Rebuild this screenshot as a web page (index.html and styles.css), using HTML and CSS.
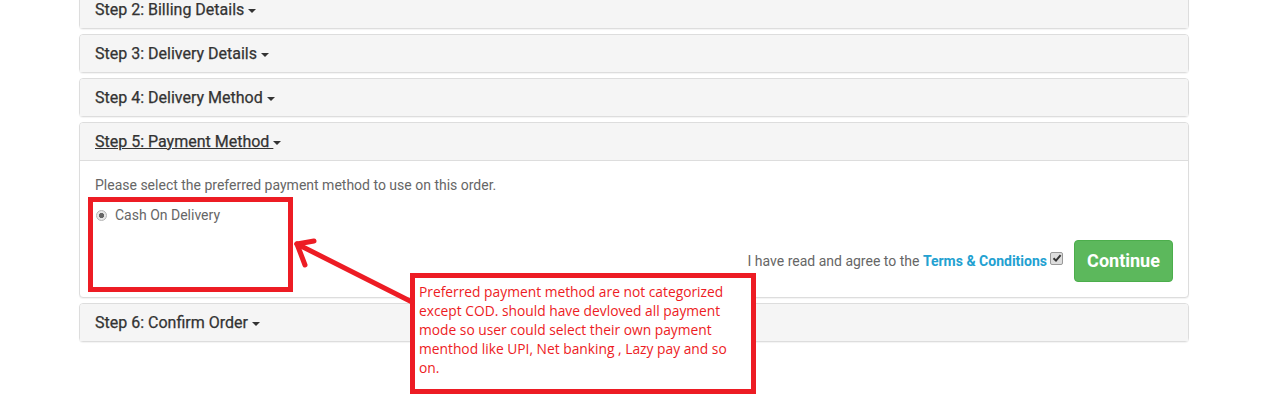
FILE: index.html
```html
<!DOCTYPE html>
<html>
<head>
<meta charset="utf-8">
<link rel="stylesheet" href="styles.css">
</head>
<body>
<div class="page">
  <div class="accordion">
    <div class="panel">
      <div class="panel-heading"><span class="panel-title">Step 2: Billing Details <span class="caret"></span></span></div>
    </div>
    <div class="panel">
      <div class="panel-heading"><span class="panel-title">Step 3: Delivery Details <span class="caret"></span></span></div>
    </div>
    <div class="panel">
      <div class="panel-heading"><span class="panel-title">Step 4: Delivery Method <span class="caret"></span></span></div>
    </div>
    <div class="panel">
      <div class="panel-heading open"><span class="panel-title"><span class="u">Step 5: Payment Method </span><span class="caret"></span></span></div>
      <div class="panel-body">
        <p class="intro">Please select the preferred payment method to use on this order.</p>
        <div class="radio"><span class="radio-dot"></span><span>Cash On Delivery</span></div>
        <div class="buttons">
          <span class="agree">I have read and agree to the <a class="terms">Terms &amp; Conditions</a></span>
          <span class="checkbox"><svg width="10" height="10" viewBox="0 0 10 10"><path d="M1.5 5.2 L4 7.6 L8.6 2.2" fill="none" stroke="#333" stroke-width="2"/></svg></span>
          <button class="btn">Continue</button>
        </div>
      </div>
    </div>
    <div class="panel">
      <div class="panel-heading"><span class="panel-title">Step 6: Confirm Order <span class="caret"></span></span></div>
    </div>
  </div>

  <div class="annot box1"></div>
  <div class="annot box2">Preferred payment method are not categorized except COD. should have devloved all payment mode so user could select their own payment menthod like UPI, Net banking , Lazy pay and so on.</div>
  <svg class="arrow" width="1275" height="406" viewBox="0 0 1275 406">
    <g stroke="#ed1c24" stroke-width="5" stroke-linecap="round" fill="none">
      <line x1="297" y1="244" x2="412" y2="302"/>
      <line x1="297" y1="244" x2="314" y2="241"/>
      <line x1="297" y1="244" x2="305" y2="265"/>
    </g>
  </svg>
</div>
</body>
</html>
```

FILE: styles.css
```css
html, body {
  margin: 0;
  padding: 0;
  background: #fff;
}
body {
  font-family: Roboto, "Liberation Sans", sans-serif;
  font-size: 14px;
  color: #666;
  overflow: hidden;
}
.page {
  position: relative;
  width: 1275px;
  height: 406px;
  overflow: hidden;
}
.accordion {
  margin: -10px 0 0 79px;
  width: 1110px;
}
.panel {
  border: 1px solid #ddd;
  border-radius: 4px;
  background: #fff;
  box-shadow: 0 1px 1px rgba(0,0,0,0.05);
}
.panel + .panel {
  margin-top: 5px;
}
.panel-heading {
  background: #f5f5f5;
  padding: 10px 15px;
  border-radius: 3px 3px 0 0;
}
.panel-heading.open {
  border-bottom: 1px solid #ddd;
}
.panel-title {
  font-size: 16px;
  line-height: 17px;
  font-weight: 400;
  color: #333;
  display: block;
  -webkit-text-stroke: 0.25px #333;
}
.u {
  text-decoration: underline;
}
.caret {
  display: inline-block;
  width: 0;
  height: 0;
  margin-left: 0;
  vertical-align: middle;
  border-top: 4px solid #333;
  border-left: 4px solid transparent;
  border-right: 4px solid transparent;
}
.panel-body {
  padding: 15px;
}
.intro {
  margin: 0 0 10px;
  line-height: 19px;
}
.radio {
  display: flex;
  align-items: center;
  line-height: 20px;
  gap: 8px;
}
.radio-dot {
  width: 11px;
  height: 11px;
  border: 1px solid #b5b5b5;
  border-radius: 50%;
  background: radial-gradient(circle, #666 0 2.4px, #e6e6e6 2.9px);
  display: inline-block;
  box-sizing: border-box;
  margin-left: 1px;
}
.buttons {
  margin-top: 15px;
  display: flex;
  justify-content: flex-end;
  align-items: center;
}
.agree {
  line-height: 20px;
}
.terms {
  color: #23a1d1;
  font-weight: 700;
}
.checkbox {
  width: 11px;
  height: 11px;
  border: 1px solid #999;
  background: #ddd;
  border-radius: 2px;
  margin: -6px 0 0 3px;
  display: inline-flex;
  align-items: center;
  justify-content: center;
}
.btn {
  margin-left: 11px;
  background: #5cb85c;
  border: 1px solid #4cae4c;
  border-radius: 4px;
  color: #fff;
  font-family: Roboto, "Liberation Sans", sans-serif;
  font-size: 18px;
  font-weight: 700;
  line-height: 24px;
  padding: 8px 0;
  width: 99px;
}
.annot {
  position: absolute;
  border: 5px solid #ed1c24;
  box-sizing: border-box;
}
.box1 {
  left: 88px;
  top: 197px;
  width: 205px;
  height: 95px;
}
.box2 {
  left: 410px;
  top: 273px;
  width: 346px;
  height: 121px;
  padding: 4px 14px 0 4px;
  font-family: "Open Sans", sans-serif;
  font-size: 13.8px;
  line-height: 19px;
  color: #ed1c24;
  background: #fff;
}
.arrow {
  position: absolute;
  left: 0;
  top: 0;
  pointer-events: none;
}
```
